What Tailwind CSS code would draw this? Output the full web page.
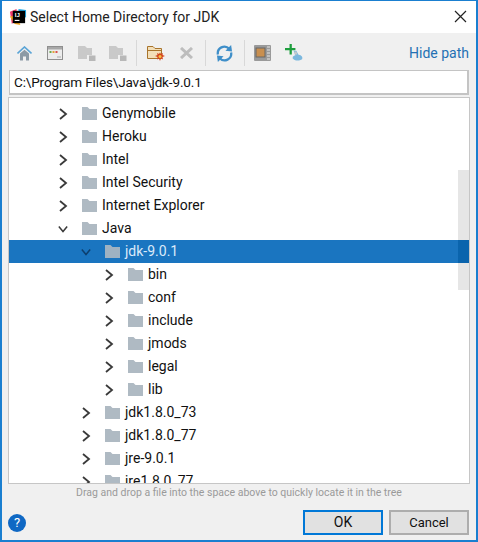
<!DOCTYPE html>
<html lang="en">
<head>
    <meta charset="UTF-8">
    <title>Select Home Directory for JDK</title>
    <script src="https://cdn.jsdelivr.net/npm/@tailwindcss/browser@4"></script>
</head>
<body class="bg-[#f0f0f0] font-['Roboto',sans-serif] text-[14px] text-[#111]">
<div class="w-[478px] h-[542px] border-2 border-t-[1px] border-[#1a7fd0] flex flex-col overflow-hidden">
    <!-- Title bar -->
    <div class="h-[32px] bg-white flex items-center shrink-0 relative">
        <svg class="ml-[7px] w-[18px] h-[18px]" viewBox="0 0 19 19">
            <path d="M1 4 L8 1 L8 12 L3 17 Z" fill="#f0386b"/>
            <path d="M1 9 L6 17 L12 18 L8 8 Z" fill="#f5a623"/>
            <path d="M10 1 L18 2 L18 10 L10 8 Z" fill="#1fa9e8"/>
            <rect x="4" y="3" width="13" height="13" fill="#000"/>
            <rect x="6" y="12.5" width="5" height="1.2" fill="#fff"/>
            <text x="6" y="10" font-size="6.5" font-weight="700" fill="#fff" font-family="Liberation Sans">IJ</text>
        </svg>
        <span class="ml-[3px] text-[14px] text-[#222]">Select Home Directory for JDK</span>
        <svg class="absolute right-[9px] top-[9px] w-[13px] h-[13px]" viewBox="0 0 13 13"><path d="M1 1 L12 12 M12 1 L1 12" stroke="#222" stroke-width="1.2" fill="none"/></svg>
    </div>

    <!-- Toolbar -->
    <div class="h-[37px] flex items-center shrink-0 pl-[15px] pr-[7px] pt-[3px]">
        <svg class="w-[15px] h-[15px]" viewBox="0 0 15 15"><path d="M0.5 7.5 L7.5 1 L14.5 7.5" stroke="#5aa4d6" stroke-width="1.6" fill="none"/><path d="M3 7.5 L7.5 3.8 L12 7.5 V14.5 H9 V10.5 H6 V14.5 H3 Z" fill="#8c9aa5"/></svg>
        <svg class="ml-[15px] w-[16px] h-[14px]" viewBox="0 0 16 14"><rect x="0.5" y="0.5" width="15" height="13" fill="#ececec" stroke="#8f8f8f"/><rect x="1" y="1" width="14" height="2.5" fill="#a8a8a8"/><rect x="2.5" y="5" width="2" height="2" fill="#6aa84f"/><rect x="5.5" y="5" width="2" height="2" fill="#e2a33b"/><rect x="8.5" y="5" width="2" height="2" fill="#d9534f"/><path d="M10 11 h4" stroke="#aaa"/></svg>
        <svg class="ml-[15px] w-[18px] h-[16px]" viewBox="0 0 18 16"><path d="M0 1 H7 L9 3 H14 V10 H9 V14 H0 Z" fill="#c9c9c9"/><rect x="11" y="10.5" width="6.5" height="5.5" fill="#b8b8b8"/></svg>
        <svg class="ml-[13px] w-[18px] h-[16px]" viewBox="0 0 18 16"><path d="M0 1 H7 L9 3 H14 V10 H9 V14 H0 Z" fill="#c9c9c9"/><rect x="11" y="10.5" width="6.5" height="5.5" fill="#b8b8b8"/></svg>
        <div class="ml-[9px] w-[1px] h-[26px] bg-[#d8d8d8]"></div>
        <svg class="ml-[10px] w-[18px] h-[16px]" viewBox="0 0 18 16"><path d="M0.5 1.5 H6 L8 3.5 H14.5 V13.5 H0.5 Z" fill="#f3dfb8" stroke="#a8742c"/><path d="M1 5.5 H14" stroke="#a8742c"/><path d="M13 7.5 L14 9 L16 8 L15.5 10 L18 11 L15.5 12 L16 14.5 L14 13.5 L13 16 L12 13.5 L10 14.5 L10.5 12 L8 11 L10.5 10 L10 8 L12 9 Z" fill="#d4451c"/><circle cx="13" cy="11.5" r="1.5" fill="#f5c242"/></svg>
        <svg class="ml-[15px] w-[13px] h-[12px]" viewBox="0 0 13 12"><path d="M1 1 L12 11 M12 1 L1 11" stroke="#bdbdbd" stroke-width="3" fill="none"/></svg>
        <div class="ml-[12px] w-[1px] h-[26px] bg-[#d8d8d8]"></div>
        <svg class="ml-[10px] w-[17px] h-[17px]" viewBox="0 0 18 18"><path d="M2 10 A7 7 0 0 1 14 4" stroke="#3f8fc9" stroke-width="2.4" fill="none"/><path d="M16 8 A7 7 0 0 1 4 14" stroke="#3f8fc9" stroke-width="2.4" fill="none"/><path d="M10 6 L17 7 L16 0 Z" fill="#3f8fc9"/><path d="M8 12 L1 11 L2 18 Z" fill="#3f8fc9"/></svg>
        <div class="ml-[11px] w-[1px] h-[26px] bg-[#d8d8d8]"></div>
        <svg class="ml-[9px] w-[17px] h-[16px]" viewBox="0 0 17 16"><rect x="0" y="0" width="17" height="16" rx="1" fill="#9a9a9a"/><rect x="2" y="3" width="9" height="9" fill="#c98f4f" stroke="#666"/><path d="M13 2 h3 M13 5 h3 M13 8 h3 M13 11 h3 M13 14 h3" stroke="#e6e6e6"/></svg>
        <svg class="ml-[14px] w-[18px] h-[18px]" viewBox="0 0 19 19"><path d="M6 0 V11 M0 5.5 H11" stroke="#1e9e3e" stroke-width="2.4" fill="none"/><path d="M9 7 H12 L14 11 C18 12 19 14 18 16 C15 18 10 18 8 15 C8 13 10 12 11 12 Z" fill="#7cb8de"/><path d="M10 8 H12 L13 11 H10 Z" fill="#c9c9c9"/></svg>
        <span class="ml-auto text-[14px] text-[#2470b3]">Hide path</span>
    </div>

    <!-- Path field -->
    <div class="mx-[7px] h-[25px] shrink-0 bg-white border-2 border-[#c4c4c4] border-t-[1px] border-l-[1px] flex items-center pl-[4px] text-[13.5px] tracking-[-0.13px]">C:\Program Files\Java\jdk-9.0.1</div>

    <!-- Tree -->
    <div class="relative mt-[2px] ml-[6px] mr-[6px] h-[387px] shrink-0 bg-white border border-[#c6c6c6] overflow-hidden pt-[4px]">
        <div class="absolute right-0 top-[72px] w-[11px] h-[120px] bg-[#e6e6e6]"></div>
        <div class="relative flex flex-col">
            <div class="h-[23px] flex items-center pl-[49px]"><svg class="w-[10px] h-[12px]" viewBox="0 0 10 12"><path d="M2 1 L8 6 L2 11" stroke="#3a3a3a" stroke-width="1.8" fill="none"/></svg><svg class="ml-[14px] w-[15px] h-[13px]" viewBox="0 0 15 13"><path d="M0 0 H5.5 L7.5 2 H15 V13 H0 Z" fill="#afbac3"/></svg><span class="ml-[5px]">Genymobile</span></div>
            <div class="h-[23px] flex items-center pl-[49px]"><svg class="w-[10px] h-[12px]" viewBox="0 0 10 12"><path d="M2 1 L8 6 L2 11" stroke="#3a3a3a" stroke-width="1.8" fill="none"/></svg><svg class="ml-[14px] w-[15px] h-[13px]" viewBox="0 0 15 13"><path d="M0 0 H5.5 L7.5 2 H15 V13 H0 Z" fill="#afbac3"/></svg><span class="ml-[5px]">Heroku</span></div>
            <div class="h-[23px] flex items-center pl-[49px]"><svg class="w-[10px] h-[12px]" viewBox="0 0 10 12"><path d="M2 1 L8 6 L2 11" stroke="#3a3a3a" stroke-width="1.8" fill="none"/></svg><svg class="ml-[14px] w-[15px] h-[13px]" viewBox="0 0 15 13"><path d="M0 0 H5.5 L7.5 2 H15 V13 H0 Z" fill="#afbac3"/></svg><span class="ml-[5px]">Intel</span></div>
            <div class="h-[23px] flex items-center pl-[49px]"><svg class="w-[10px] h-[12px]" viewBox="0 0 10 12"><path d="M2 1 L8 6 L2 11" stroke="#3a3a3a" stroke-width="1.8" fill="none"/></svg><svg class="ml-[14px] w-[15px] h-[13px]" viewBox="0 0 15 13"><path d="M0 0 H5.5 L7.5 2 H15 V13 H0 Z" fill="#afbac3"/></svg><span class="ml-[5px]">Intel Security</span></div>
            <div class="h-[23px] flex items-center pl-[49px]"><svg class="w-[10px] h-[12px]" viewBox="0 0 10 12"><path d="M2 1 L8 6 L2 11" stroke="#3a3a3a" stroke-width="1.8" fill="none"/></svg><svg class="ml-[14px] w-[15px] h-[13px]" viewBox="0 0 15 13"><path d="M0 0 H5.5 L7.5 2 H15 V13 H0 Z" fill="#afbac3"/></svg><span class="ml-[5px]">Internet Explorer</span></div>
            <div class="h-[23px] flex items-center pl-[49px]"><svg class="w-[10px] h-[12px]" viewBox="0 0 12 10"><path d="M1 2 L6 8 L11 2" stroke="#3a3a3a" stroke-width="1.8" fill="none"/></svg><svg class="ml-[14px] w-[15px] h-[13px]" viewBox="0 0 15 13"><path d="M0 0 H5.5 L7.5 2 H15 V13 H0 Z" fill="#afbac3"/></svg><span class="ml-[5px]">Java</span></div>
            <div class="h-[23px] flex items-center pl-[72px] bg-[#1a75c0] text-[#dbeafa] relative"><svg class="w-[10px] h-[12px]" viewBox="0 0 12 10"><path d="M1 2 L6 8 L11 2" stroke="#0d3f6e" stroke-width="1.8" fill="none"/></svg><svg class="ml-[14px] w-[15px] h-[13px]" viewBox="0 0 15 13"><path d="M0 0 H5.5 L7.5 2 H15 V13 H0 Z" fill="#9fb2c2"/></svg><span class="ml-[5px]">jdk-9.0.1</span><div class="absolute right-0 top-0 w-[11px] h-full bg-[#0a64ad]"></div></div>
            <div class="h-[23px] flex items-center pl-[95px]"><svg class="w-[10px] h-[12px]" viewBox="0 0 10 12"><path d="M2 1 L8 6 L2 11" stroke="#3a3a3a" stroke-width="1.8" fill="none"/></svg><svg class="ml-[14px] w-[15px] h-[13px]" viewBox="0 0 15 13"><path d="M0 0 H5.5 L7.5 2 H15 V13 H0 Z" fill="#afbac3"/></svg><span class="ml-[5px]">bin</span></div>
            <div class="h-[23px] flex items-center pl-[95px]"><svg class="w-[10px] h-[12px]" viewBox="0 0 10 12"><path d="M2 1 L8 6 L2 11" stroke="#3a3a3a" stroke-width="1.8" fill="none"/></svg><svg class="ml-[14px] w-[15px] h-[13px]" viewBox="0 0 15 13"><path d="M0 0 H5.5 L7.5 2 H15 V13 H0 Z" fill="#afbac3"/></svg><span class="ml-[5px]">conf</span></div>
            <div class="h-[23px] flex items-center pl-[95px]"><svg class="w-[10px] h-[12px]" viewBox="0 0 10 12"><path d="M2 1 L8 6 L2 11" stroke="#3a3a3a" stroke-width="1.8" fill="none"/></svg><svg class="ml-[14px] w-[15px] h-[13px]" viewBox="0 0 15 13"><path d="M0 0 H5.5 L7.5 2 H15 V13 H0 Z" fill="#afbac3"/></svg><span class="ml-[5px]">include</span></div>
            <div class="h-[23px] flex items-center pl-[95px]"><svg class="w-[10px] h-[12px]" viewBox="0 0 10 12"><path d="M2 1 L8 6 L2 11" stroke="#3a3a3a" stroke-width="1.8" fill="none"/></svg><svg class="ml-[14px] w-[15px] h-[13px]" viewBox="0 0 15 13"><path d="M0 0 H5.5 L7.5 2 H15 V13 H0 Z" fill="#afbac3"/></svg><span class="ml-[5px]">jmods</span></div>
            <div class="h-[23px] flex items-center pl-[95px]"><svg class="w-[10px] h-[12px]" viewBox="0 0 10 12"><path d="M2 1 L8 6 L2 11" stroke="#3a3a3a" stroke-width="1.8" fill="none"/></svg><svg class="ml-[14px] w-[15px] h-[13px]" viewBox="0 0 15 13"><path d="M0 0 H5.5 L7.5 2 H15 V13 H0 Z" fill="#afbac3"/></svg><span class="ml-[5px]">legal</span></div>
            <div class="h-[23px] flex items-center pl-[95px]"><svg class="w-[10px] h-[12px]" viewBox="0 0 10 12"><path d="M2 1 L8 6 L2 11" stroke="#3a3a3a" stroke-width="1.8" fill="none"/></svg><svg class="ml-[14px] w-[15px] h-[13px]" viewBox="0 0 15 13"><path d="M0 0 H5.5 L7.5 2 H15 V13 H0 Z" fill="#afbac3"/></svg><span class="ml-[5px]">lib</span></div>
            <div class="h-[23px] flex items-center pl-[72px]"><svg class="w-[10px] h-[12px]" viewBox="0 0 10 12"><path d="M2 1 L8 6 L2 11" stroke="#3a3a3a" stroke-width="1.8" fill="none"/></svg><svg class="ml-[14px] w-[15px] h-[13px]" viewBox="0 0 15 13"><path d="M0 0 H5.5 L7.5 2 H15 V13 H0 Z" fill="#afbac3"/></svg><span class="ml-[5px]">jdk1.8.0_73</span></div>
            <div class="h-[23px] flex items-center pl-[72px]"><svg class="w-[10px] h-[12px]" viewBox="0 0 10 12"><path d="M2 1 L8 6 L2 11" stroke="#3a3a3a" stroke-width="1.8" fill="none"/></svg><svg class="ml-[14px] w-[15px] h-[13px]" viewBox="0 0 15 13"><path d="M0 0 H5.5 L7.5 2 H15 V13 H0 Z" fill="#afbac3"/></svg><span class="ml-[5px]">jdk1.8.0_77</span></div>
            <div class="h-[23px] flex items-center pl-[72px]"><svg class="w-[10px] h-[12px]" viewBox="0 0 10 12"><path d="M2 1 L8 6 L2 11" stroke="#3a3a3a" stroke-width="1.8" fill="none"/></svg><svg class="ml-[14px] w-[15px] h-[13px]" viewBox="0 0 15 13"><path d="M0 0 H5.5 L7.5 2 H15 V13 H0 Z" fill="#afbac3"/></svg><span class="ml-[5px]">jre-9.0.1</span></div>
            <div class="h-[23px] flex items-center pl-[72px]"><svg class="w-[10px] h-[12px]" viewBox="0 0 10 12"><path d="M2 1 L8 6 L2 11" stroke="#3a3a3a" stroke-width="1.8" fill="none"/></svg><svg class="ml-[14px] w-[15px] h-[13px]" viewBox="0 0 15 13"><path d="M0 0 H5.5 L7.5 2 H15 V13 H0 Z" fill="#afbac3"/></svg><span class="ml-[5px]">jre1.8.0_77</span></div>
        </div>
    </div>

    <!-- Hint -->
    <div class="h-[18px] shrink-0 text-center text-[10.5px] leading-[18px] text-[#9a9a9a]">Drag and drop a file into the space above to quickly locate it in the tree</div>

    <!-- Footer -->
    <div class="flex items-center pl-[6px] pr-[7px] mt-[8px]">
        <div class="w-[18px] h-[18px] rounded-full bg-[#0f68c4] text-white text-[13px] flex items-center justify-center">?</div>
        <button class="ml-auto w-[80px] h-[25px] bg-[#e1e1e1] border-2 border-[#0078d7] text-[14px]">OK</button>
        <button class="ml-[6px] w-[80px] h-[25px] bg-[#e1e1e1] border-2 border-[#adadad] text-[13px]">Cancel</button>
    </div>
</div>
</body>
</html>
